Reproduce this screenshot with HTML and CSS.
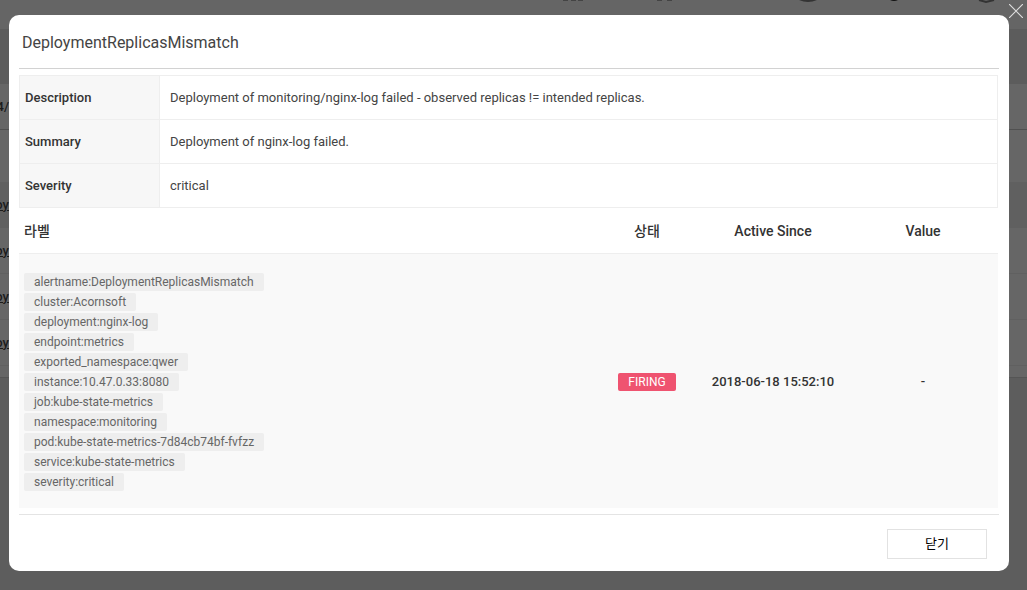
FILE: index.html
```html
<!DOCTYPE html>
<html lang="ko">
<head>
<meta charset="utf-8">
<title>DeploymentReplicasMismatch</title>
<link rel="stylesheet" href="styles.css">
</head>
<body>
<div class="page" aria-hidden="true">
  <div class="page-top">
    <svg class="page-icons" width="440" height="8" viewBox="0 0 440 8">
      <path d="M0 0h5v1H0zM8 0h5v1H8zM15 0h5v1h-5zM94 0h5v1h-5zM104 0h5v1h-5z" fill="#444"/>
      <path d="M236 0h18q-9 4-18 0z" fill="#333"/>
      <path d="M327 0h8q-4 2-8 0z" fill="#111"/>
      <path d="M416 0l7 2 8-2" fill="none" stroke="#333" stroke-width="2"/>
    </svg>
  </div>
  <div class="page-nav"></div>
  <div class="page-head"><span class="page-text">4/</span></div>
  <div class="page-gap"></div>
  <div class="page-row page-row-alt"><span class="page-text page-link">oy</span></div>
  <div class="page-row"><span class="page-text page-link">oy</span></div>
  <div class="page-row"><span class="page-text page-link">oy</span></div>
  <div class="page-row"><span class="page-text page-link">oy</span></div>
  <div class="page-end"></div>
</div>
<div class="overlay">
  <main class="modal" role="dialog" aria-labelledby="title">
    <h1 class="modal-title" id="title">DeploymentReplicasMismatch</h1>
    <div class="modal-body">
      <table class="info">
        <tr><th scope="row">Description</th><td>Deployment of monitoring/nginx-log failed - observed replicas != intended replicas.</td></tr>
        <tr><th scope="row">Summary</th><td>Deployment of nginx-log failed.</td></tr>
        <tr><th scope="row">Severity</th><td>critical</td></tr>
      </table>
      <table class="alerts">
        <colgroup><col><col class="col-status"><col class="col-since"><col class="col-value"></colgroup>
        <thead><tr><th scope="col">라벨</th><th scope="col">상태</th><th scope="col">Active Since</th><th scope="col">Value</th></tr></thead>
        <tbody><tr>
          <td>
            <ul class="labels">
              <li>alertname:DeploymentReplicasMismatch</li>
              <li>cluster:Acornsoft</li>
              <li>deployment:nginx-log</li>
              <li>endpoint:metrics</li>
              <li>exported_namespace:qwer</li>
              <li>instance:10.47.0.33:8080</li>
              <li>job:kube-state-metrics</li>
              <li>namespace:monitoring</li>
              <li>pod:kube-state-metrics-7d84cb74bf-fvfzz</li>
              <li>service:kube-state-metrics</li>
              <li>severity:critical</li>
            </ul>
          </td>
          <td><span class="badge">FIRING</span></td>
          <td>2018-06-18 15:52:10</td>
          <td>-</td>
        </tr></tbody>
      </table>
    </div>
    <footer class="modal-foot"><button class="btn" type="button">닫기</button></footer>
    <button class="close" type="button" aria-label="Close">
      <svg width="14" height="14" viewBox="0 0 14 14"><path d="M0 0l14 14M14 0L0 14" fill="none" stroke="#ddd" stroke-width="1.2"/></svg>
    </button>
  </main>
</div>
</body>
</html>
```

FILE: styles.css
```css
* { box-sizing: border-box; }
body {
  margin: 0;
  background: #5d5d5d;
  color: #333;
  font-family: Roboto, "Noto Sans CJK KR", sans-serif;
  font-size: 13px;
  line-height: 20px;
}
.page { position: absolute; inset: 0; overflow: hidden; }
.page-top { height: 29px; background: #656565; display: flex; justify-content: flex-end; padding-right: 24px; }
.page-nav { height: 55px; background: #5c5c5c; }
.page-head { height: 46px; background: #666; border-bottom: 1px solid #505050; display: flex; align-items: center; }
.page-gap { height: 52px; background: #666; }
.page-row { height: 46px; background: #666; border-bottom: 1px solid #606060; display: flex; align-items: center; }
.page-row-alt { background: #606060; }
.page-end { height: 12px; background: #666; border-bottom: 1px solid #555; }
.page-text { width: 9px; display: flex; justify-content: flex-end; color: #1c1c1c; font-weight: 500; }
.page-link { text-decoration: underline; }
.overlay { position: relative; padding: 15px 18px 19px 9px; }
.modal { position: relative; background: #fff; border-radius: 10px; padding: 0 10px; }
.modal-title {
  margin: 0;
  padding: 16px 3px 13px;
  border-bottom: 1px solid #d2d2d2;
  color: #444;
  font-size: 16px;
  font-weight: 400;
  line-height: 24px;
}
.modal-body { padding: 6px 1px 6px 0; border-bottom: 1px solid #e4e4e4; }
.info, .alerts { width: 100%; border-collapse: collapse; }
.info th, .info td { height: 44px; padding: 0 10px; border: 1px solid #eee; text-align: left; font-weight: 400; color: #444; }
.info th { width: 140px; padding: 0 5px; background: #f7f7f7; color: #333; font-weight: 500; }
.alerts { table-layout: fixed; }
.col-status { width: 102px; }
.col-since, .col-value { width: 150px; }
.alerts th { height: 45px; padding: 2px 0 0; font-size: 14px; font-weight: 500; }
.alerts td { padding: 19px 0 17px; background: #f9f9f9; border-top: 1px solid #eee; text-align: center; font-weight: 500; }
.alerts th:first-child, .alerts td:first-child { padding-left: 5px; text-align: left; }
.labels { margin: 0; padding: 0; list-style: none; display: flex; flex-direction: column; align-items: flex-start; gap: 2px; }
.labels li, .badge { padding: 0 10px; border-radius: 2px; font-size: 12px; line-height: 18px; font-weight: 400; }
.labels li { background: #eee; color: #666; }
.badge { display: inline-block; background: #ef5370; color: #fff; }
.modal-foot { display: flex; justify-content: flex-end; padding: 14px 12px 12px; }
.btn { width: 100px; height: 30px; padding: 0; border: 1px solid #e2e2e2; background: #fff; color: #000; font: inherit; }
.close { position: absolute; top: -11px; right: -14px; padding: 0; border: 0; background: none; display: flex; }
```
